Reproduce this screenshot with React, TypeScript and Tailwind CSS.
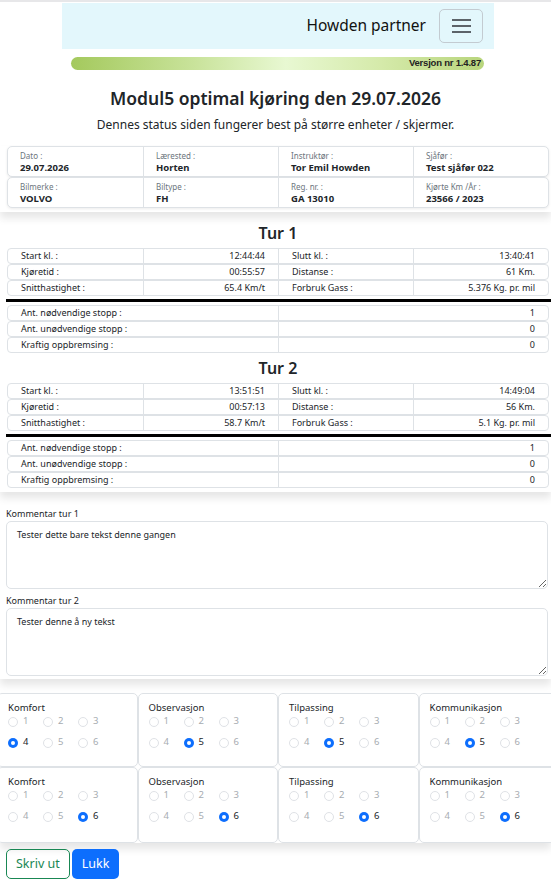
import React from "react";

type Trip = {
  title: string;
  start: string;
  end: string;
  duration: string;
  distance: string;
  speed: string;
  gas: string;
  stops: [string, string][];
};

const trips: Trip[] = [
  {
    title: "Tur 1",
    start: "12:44:44",
    end: "13:40:41",
    duration: "00:55:57",
    distance: "61 Km.",
    speed: "65.4 Km/t",
    gas: "5.376 Kg. pr. mil",
    stops: [
      ["Ant. nødvendige stopp :", "1"],
      ["Ant. unødvendige stopp :", "0"],
      ["Kraftig oppbremsing :", "0"],
    ],
  },
  {
    title: "Tur 2",
    start: "13:51:51",
    end: "14:49:04",
    duration: "00:57:13",
    distance: "56 Km.",
    speed: "58.7 Km/t",
    gas: "5.1 Kg. pr. mil",
    stops: [
      ["Ant. nødvendige stopp :", "1"],
      ["Ant. unødvendige stopp :", "0"],
      ["Kraftig oppbremsing :", "0"],
    ],
  },
];

const infoRows = [
  [
    ["Dato :", "29.07.2026"],
    ["Lærested :", "Horten"],
    ["Instruktør :", "Tor Emil Howden"],
    ["Sjåfør :", "Test sjåfør 022"],
  ],
  [
    ["Bilmerke :", "VOLVO"],
    ["Biltype :", "FH"],
    ["Reg. nr. :", "GA 13010"],
    ["Kjørte Km /År :", "23566 /  2023"],
  ],
];

const ratings = [
  [
    ["Komfort", 4],
    ["Observasjon", 5],
    ["Tilpassing", 5],
    ["Kommunikasjon", 5],
  ],
  [
    ["Komfort", 6],
    ["Observasjon", 6],
    ["Tilpassing", 6],
    ["Kommunikasjon", 6],
  ],
] as [string, number][][];

const Radio = ({ value, checked }: { value: number; checked: boolean }) => (
  <div className="flex items-center gap-[5px] w-[35px] h-[13px]">
    {checked ? (
      <span className="w-[10px] h-[10px] rounded-full bg-[#0d6efd] flex items-center justify-center">
        <span className="w-[4px] h-[4px] rounded-full bg-white" />
      </span>
    ) : (
      <span className="w-[10px] h-[10px] rounded-full border border-[#dfe2e6] bg-white" />
    )}
    <span className={checked ? "text-[#212529]" : "text-[#a7acb1]"}>{value}</span>
  </div>
);

const RatingCard = ({ label, value }: { label: string; value: number }) => (
  <div className="border border-[#dee2e6] rounded-[5px] h-full pl-[10px] pt-[7px] text-[9.5px]">
    <div className="leading-[13px] text-[#212529]">{label}</div>
    <div className="grid grid-cols-[35px_35px_35px] gap-y-[8px] mt-[1px]">
      {[1, 2, 3, 4, 5, 6].map((n) => (
        <Radio key={n} value={n} checked={n === value} />
      ))}
    </div>
  </div>
);

const TripTable = ({ trip }: { trip: Trip }) => {
  const top = [
    ["Start kl. :", trip.start, "Slutt kl. :", trip.end],
    ["Kjøretid :", trip.duration, "Distanse :", trip.distance],
    ["Snitthastighet :", trip.speed, "Forbruk Gass :", trip.gas],
  ];
  return (
    <div>
      <div className="h-[22px] flex items-center justify-center text-[16px] font-semibold text-[#212529] mb-[4px]">
        {trip.title}
      </div>
      {top.map((r) => (
        <div
          key={r[0]}
          className="grid grid-cols-4 h-[16px] border border-[#dee2e6] rounded-[4px] text-[9px] leading-[14px]"
        >
          <div className="pl-[13px]">{r[0]}</div>
          <div className="border-l border-[#dee2e6] text-right pr-[13px]">{r[1]}</div>
          <div className="border-l border-[#dee2e6] pl-[13px]">{r[2]}</div>
          <div className="border-l border-[#dee2e6] text-right pr-[13px]">{r[3]}</div>
        </div>
      ))}
      <div className="h-[3px] bg-black my-[3px] -mr-[2px] -ml-[1px]" />
      {trip.stops.map(([label, val]) => (
        <div
          key={label}
          className="grid grid-cols-2 h-[16px] border border-[#dee2e6] rounded-[4px] text-[9px] leading-[14px]"
        >
          <div className="pl-[13px]">{label}</div>
          <div className="border-l border-[#dee2e6] text-right pr-[13px]">{val}</div>
        </div>
      ))}
    </div>
  );
};

export default function App() {
  return (
    <div className="min-h-[882px] bg-white border-t-2 border-[#e7e7e9] font-['Noto_Sans',sans-serif] text-[#212529]">
      {/* top bar */}
      <div className="ml-[62px] w-[432px] h-[46px] mt-[1px] bg-[#e3f7fc] flex items-center justify-end pr-[11px] gap-[13px]">
        <span className="text-[15.5px] text-[#111]">Howden partner</span>
        <button className="w-[44px] h-[34px] rounded-[5px] border border-[#c3cbd1] flex flex-col items-center justify-center gap-[4px]">
          <span className="w-[19px] h-[2px] bg-[#5c6369]" />
          <span className="w-[19px] h-[2px] bg-[#5c6369]" />
          <span className="w-[19px] h-[2px] bg-[#5c6369]" />
        </button>
      </div>

      <div className="ml-[71px] w-[413px] h-[13px] mt-[8px] rounded-full bg-[linear-gradient(90deg,#a4c95d_0%,#c9e39b_30%,#e8f8d2_52%,#d5eaaa_75%,#b8d57c_100%)] flex items-center justify-end pr-[3px]">
        <span className="text-[9.5px] font-bold text-[#222] font-['Liberation_Sans_Narrow','Liberation_Sans',sans-serif] tracking-[-0.2px]">
          Versjon nr 1.4.87
        </span>
      </div>

      <h1 className="text-center text-[17.5px] font-semibold mt-[15px] leading-[26px]">
        Modul5 optimal kjøring den 29.07.2026
      </h1>
      <p className="text-center text-[12px] mt-[4px] leading-[20px]">
        Dennes status siden fungerer best på større enheter / skjermer.
      </p>

      {/* driver and car info */}
      <div className="mt-[11px] pl-[7px] pr-[2px] pb-[4px] shadow-[0_6px_8px_rgba(0,0,0,0.10)]">
        {infoRows.map((row, i) => (
          <div
            key={i}
            className="grid grid-cols-4 h-[31px] border border-[#dee2e6] rounded-[5px] bg-white shadow-[0_1px_3px_rgba(0,0,0,0.08)]"
          >
            {row.map(([label, value], j) => (
              <div
                key={label}
                className={`pl-[12px] pt-[3px] ${j > 0 ? "border-l border-[#dee2e6]" : ""}`}
              >
                <div className="text-[8px] leading-[11px] text-[#6c757d]">{label}</div>
                <div className="text-[9.5px] leading-[14px] font-bold">{value}</div>
              </div>
            ))}
          </div>
        ))}
      </div>

      {/* trips */}
      <div className="mt-[10px] pl-[7px] pr-[2px] pb-[4px] shadow-[0_6px_8px_rgba(0,0,0,0.10)]">
        {trips.map((t, i) => (
          <div key={t.title} className={i > 0 ? "mt-[4px]" : ""}>
            <TripTable trip={t} />
          </div>
        ))}
      </div>

      {/* comments */}
      <div className="mt-[3px] pl-[6px] pr-[3px] pt-[12px] pb-[3px] shadow-[0_6px_8px_rgba(0,0,0,0.10)]">
        {[
          ["Kommentar tur 1", "Tester dette bare tekst denne gangen"],
          ["Kommentar tur 2", "Tester denne å ny tekst"],
        ].map(([label, text], i) => (
          <div key={label} className={i > 0 ? "mt-[5px]" : ""}>
            <div className="text-[9px] leading-[13px]">{label}</div>
            <textarea
              readOnly
              defaultValue={text}
              className="block w-full h-[68px] mt-[1px] border border-[#dee2e6] rounded-[5px] px-[10px] py-[6px] text-[9px] leading-[14px] text-[#212529] outline-none"
            />
          </div>
        ))}
      </div>

      {/* ratings */}
      <div className="mt-[14px] overflow-hidden shadow-[0_6px_8px_rgba(0,0,0,0.10)]">
        <div className="w-[562px] -ml-[3px] grid grid-cols-4 grid-rows-[74px_76px]">
          {ratings.flat().map(([label, value], i) => (
            <RatingCard key={i} label={label} value={value} />
          ))}
        </div>
      </div>

      <div className="flex gap-[2px] pl-[6px] mt-[6px]">
        <button className="h-[30px] px-[9px] rounded-[5px] border border-[#198754] text-[#198754] text-[12.5px]">
          Skriv ut
        </button>
        <button className="h-[30px] px-[10px] rounded-[5px] bg-[#0d6efd] text-white text-[12.5px]">
          Lukk
        </button>
      </div>
    </div>
  );
}
